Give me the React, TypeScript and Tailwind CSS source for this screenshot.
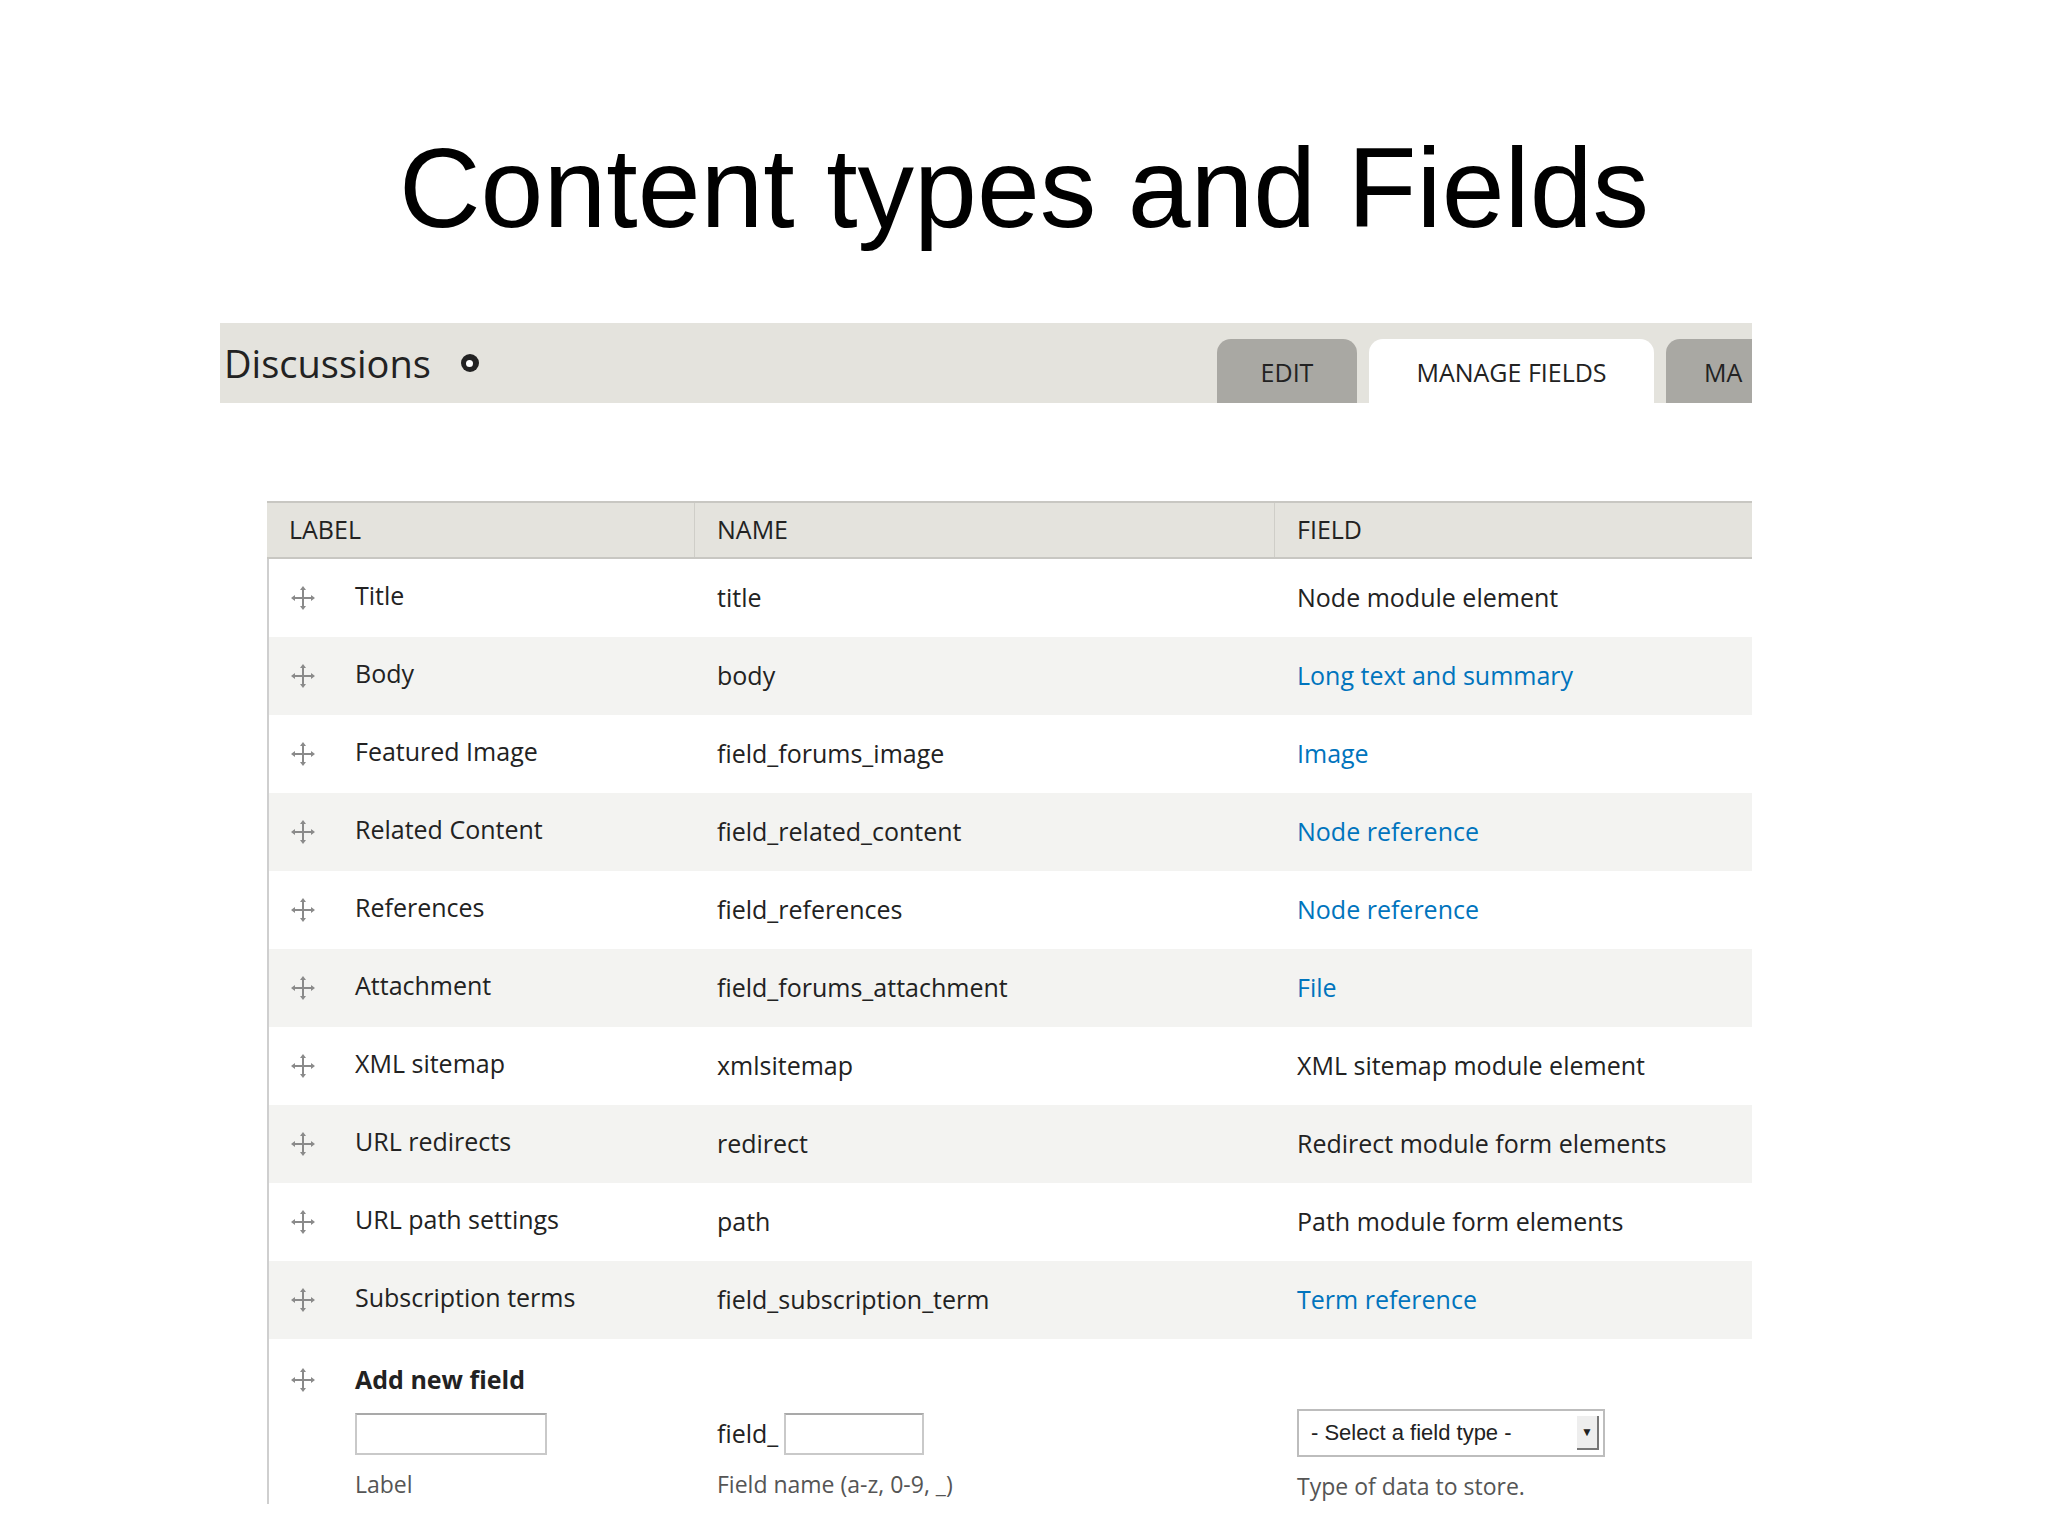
const rows: [string, string, string, boolean][] = [
  ["Title", "title", "Node module element", false],
  ["Body", "body", "Long text and summary", true],
  ["Featured Image", "field_forums_image", "Image", true],
  ["Related Content", "field_related_content", "Node reference", true],
  ["References", "field_references", "Node reference", true],
  ["Attachment", "field_forums_attachment", "File", true],
  ["XML sitemap", "xmlsitemap", "XML sitemap module element", false],
  ["URL redirects", "redirect", "Redirect module form elements", false],
  ["URL path settings", "path", "Path module form elements", false],
  ["Subscription terms", "field_subscription_term", "Term reference", true],
]

const Drag = () => (
  <svg width="28" height="28" viewBox="0 0 28 28" className="shrink-0">
    <g stroke="#8a8a8a" strokeWidth="2" fill="#8a8a8a">
      <line x1="14" y1="4" x2="14" y2="24" />
      <line x1="4" y1="14" x2="24" y2="14" />
      <path d="M14 2 l-3 4 h6z M14 26 l-3 -4 h6z M2 14 l4 -3 v6z M26 14 l-4 -3 v6z" strokeWidth="0" />
    </g>
  </svg>
)

export default function App() {
  return (
    <div className="w-[2048px] h-[1535px] bg-white overflow-hidden" style={{ fontFamily: '"Open Sans", "DejaVu Sans", sans-serif' }}>
      <h1 className="pt-[132px] text-center text-[113px] leading-[1] text-black" style={{ fontFamily: '"Liberation Sans", Arial, sans-serif' }}>
        Content types and Fields
      </h1>
      <div className="ml-[220px] mt-[78px] w-[1532px] h-[80px] bg-[#e4e3dd] flex items-end justify-between overflow-hidden">
        <div className="self-center flex items-center gap-[30px] pl-[4px] text-[38px] text-[#222]">
          Discussions
          <span className="w-[18px] h-[18px] rounded-full bg-[#222] flex items-center justify-center">
            <span className="w-[7px] h-[7px] rounded-full bg-white" />
          </span>
        </div>
        <div className="flex gap-[12px] text-[25px] text-[#222]">
          <div className="w-[140px] h-[64px] bg-[#a9a8a3] rounded-t-[14px] flex items-center justify-center pt-[4px]">EDIT</div>
          <div className="w-[285px] h-[64px] bg-white rounded-t-[14px] flex items-center justify-center pt-[4px]">MANAGE FIELDS</div>
          <div className="w-[86px] h-[64px] bg-[#a9a8a3] rounded-tl-[14px] flex items-center pl-[38px] pt-[4px] overflow-hidden whitespace-nowrap">MA</div>
        </div>
      </div>
      <div className="ml-[267px] mt-[98px] w-[1485px] text-[25px] text-[#222]">
        <div className="flex h-[58px] bg-[#e4e3dd] border-y-2 border-[#c8c7c2] items-center">
          <div className="w-[428px] pl-[22px] h-full flex items-center border-r border-[#cfcec8]">LABEL</div>
          <div className="w-[580px] pl-[22px] h-full flex items-center border-r border-[#cfcec8]">NAME</div>
          <div className="flex-1 pl-[22px]">FIELD</div>
        </div>
        <div className="border-l-2 border-[#cfcfcf]">
          {rows.map(([label, name, field, link], i) => (
            <div key={label} className={`flex h-[78px] items-center ${i % 2 ? "bg-[#f3f3f1]" : "bg-white"}`}>
              <div className="w-[428px] pl-[20px] flex items-center gap-[38px]">
                <Drag />
                <span className="-mt-[4px]">{label}</span>
              </div>
              <div className="w-[580px] pl-[20px]">{name}</div>
              <div className={`flex-1 pl-[20px] ${link ? "text-[#0074bd]" : ""}`}>{field}</div>
            </div>
          ))}
          <div className="h-[165px] pt-[22px] pl-[20px]">
            <div className="flex items-center gap-[38px] font-bold">
              <Drag />
              Add new field
            </div>
            <div className="flex mt-[14px]">
              <div className="w-[408px] pl-[66px]">
                <div className="w-[192px] h-[42px] border-2 border-[#c9c9c9] border-t-[#a9a9a9]" />
                <div className="mt-[12px] text-[23px] text-[#555]">Label</div>
              </div>
              <div className="w-[580px] pl-[20px]">
                <div className="flex items-center gap-[6px]">
                  field_
                  <div className="w-[140px] h-[42px] border-2 border-[#c9c9c9] border-t-[#a9a9a9]" />
                </div>
                <div className="mt-[12px] text-[23px] text-[#555]">Field name (a-z, 0-9, _)</div>
              </div>
              <div className="pl-[20px]">
                <div className="w-[308px] h-[48px] border-2 border-[#bdbdbd] flex items-center justify-between pl-[12px] pr-[4px] text-[22px] -mt-[4px]" style={{ fontFamily: '"Liberation Sans", Arial, sans-serif' }}>
                  - Select a field type -
                  <span className="w-[22px] h-[34px] bg-[#eee] border-r-2 border-b-2 border-[#777] flex items-center justify-center text-[12px]">▼</span>
                </div>
                <div className="mt-[12px] text-[23px] text-[#555]">Type of data to store.</div>
              </div>
            </div>
          </div>
        </div>
      </div>
    </div>
  )
}
